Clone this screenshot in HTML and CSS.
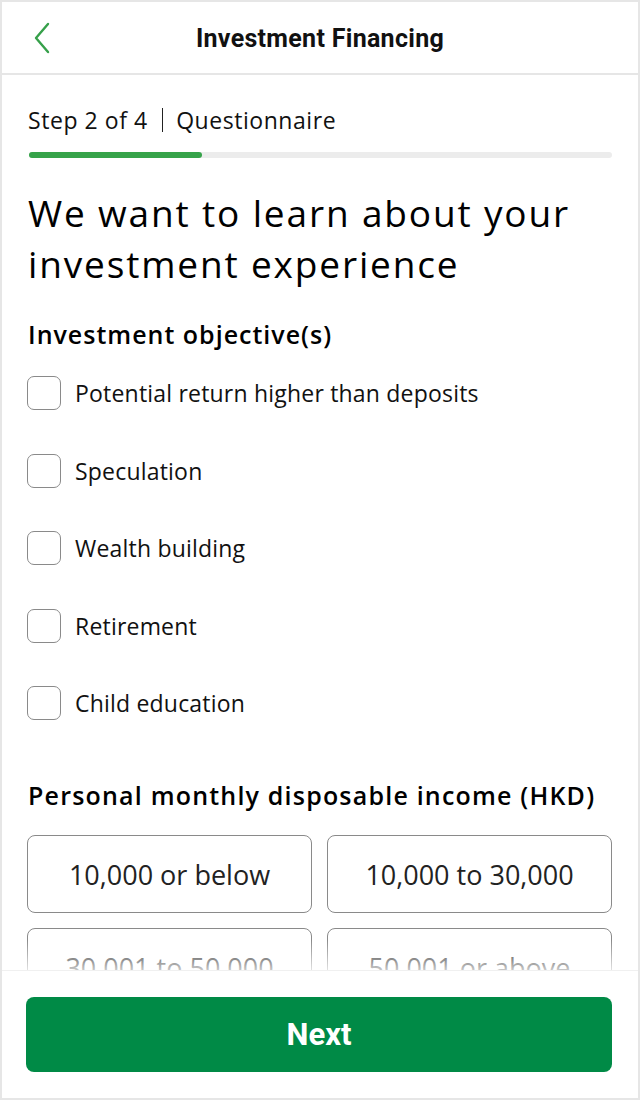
FILE: index.html
```html
<!DOCTYPE html>
<html lang="en">
<head>
<meta charset="utf-8">
<title>Investment Financing</title>
<link rel="stylesheet" href="styles.css">
</head>
<body>
<div class="screen">
  <header class="topbar">
    <button class="back" aria-label="Back">
      <svg width="18" height="32" viewBox="0 0 18 32"><path d="M15 2 L3 16 L15 30" fill="none" stroke="#36a04a" stroke-width="2.4" stroke-linecap="round" stroke-linejoin="round"/></svg>
    </button>
    <h1 class="title">Investment Financing</h1>
  </header>
  <main class="content">
    <div class="step">Step 2 of 4<span class="sep"></span>Questionnaire</div>
    <div class="progress"><div class="progress-fill" style="width:29.6%"></div></div>
    <h2 class="heading">We want to learn about your investment experience</h2>
    <h3 class="section">Investment objective(s)</h3>
    <ul class="checks">
      <li class="check"><span class="box"></span>Potential return higher than deposits</li>
      <li class="check"><span class="box"></span>Speculation</li>
      <li class="check"><span class="box"></span>Wealth building</li>
      <li class="check"><span class="box"></span>Retirement</li>
      <li class="check"><span class="box"></span>Child education</li>
    </ul>
    <h3 class="section section-income">Personal monthly disposable income (HKD)</h3>
    <div class="options">
      <div class="option">10,000 or below</div>
      <div class="option">10,000 to 30,000</div>
      <div class="option">30,001 to 50,000</div>
      <div class="option">50,001 or above</div>
    </div>
  </main>
  <div class="fade"></div>
  <footer class="footer">
    <button class="next">Next</button>
  </footer>
</div>
</body>
</html>
```
FILE: styles.css
```css
html, body {
  margin: 0;
  padding: 0;
  background: #fff;
}
* { box-sizing: border-box; }
.screen {
  width: 640px;
  height: 1100px;
  border: 2px solid #e6e6e6;
  position: relative;
  overflow: hidden;
  font-family: "Open Sans", "Liberation Sans", sans-serif;
  color: #111;
  background: #fff;
}
.topbar {
  height: 73px;
  border-bottom: 2px solid #e6e6e6;
  display: flex;
  align-items: center;
  justify-content: center;
  position: relative;
}
.back {
  position: absolute;
  left: 31px;
  top: 20px;
  padding: 0;
  border: 0;
  background: none;
  width: 18px;
  height: 32px;
}
.title {
  margin: 0;
  font-family: "Roboto", sans-serif;
  font-weight: 700;
  font-size: 25px;
  letter-spacing: 0.3px;
  color: #111;
  margin-top: 2px;
}
.content {
  padding: 0 26px 0 26px;
}
.step {
  margin-top: 31px;
  font-size: 23px;
  letter-spacing: 0.55px;
  line-height: 28px;
  display: flex;
  align-items: center;
  color: #111;
}
.sep {
  display: inline-block;
  width: 1.5px;
  height: 24px;
  background: #222;
  margin: 0 13px 0 14px;
}
.progress {
  margin-top: 18px;
  height: 6px;
  background: #ececec;
  border-radius: 3px;
  margin-left: 1px;
}
.progress-fill {
  height: 100%;
  background: #36a34a;
  border-radius: 3px;
}
.heading {
  margin: 29px 0 0 0;
  font-size: 37px;
  line-height: 51px;
  font-weight: 500;
  letter-spacing: 1.85px;
  color: #000;
}
.section {
  margin: 30px 0 0 0;
  font-size: 25px;
  line-height: 30px;
  font-weight: 600;
  letter-spacing: 1px;
  color: #000;
}
.checks {
  list-style: none;
  padding: 0;
  margin: 27px 0 0 0;
  display: flex;
  flex-direction: column;
  gap: 43.5px;
}
.check {
  display: flex;
  align-items: center;
  font-size: 23px;
  letter-spacing: 0.2px;
  height: 34px;
  color: #111;
}
.box {
  width: 34px;
  height: 34px;
  border: 1.5px solid #8a8a8a;
  border-radius: 7px;
  margin-right: 14px;
  flex-shrink: 0;
  margin-left: -1px;
}
.section-income {
  margin-top: 60px;
  letter-spacing: 1.2px;
}
.options {
  margin-top: 25px;
  margin-left: -1px;
  display: grid;
  grid-template-columns: 1fr 1fr;
  column-gap: 15px;
  row-gap: 15px;
}
.option {
  height: 78px;
  border: 1.5px solid #8a8a8a;
  border-radius: 8px;
  display: flex;
  align-items: center;
  justify-content: center;
  font-size: 27px;
  color: #222;
}
.fade {
  position: absolute;
  left: 0;
  right: 0;
  bottom: 128px;
  height: 30px;
  background: linear-gradient(to bottom, rgba(255,255,255,0), rgba(255,255,255,0.75));
}
.footer {
  position: absolute;
  left: 0;
  right: 0;
  bottom: 0;
  height: 128px;
  background: #fff;
  padding: 26px 26px 0 24px;
  border-top: 1px solid #f0f0f0;
}
.next {
  width: 100%;
  height: 75px;
  border: 0;
  border-radius: 8px;
  background: #008a46;
  color: #fff;
  font-family: "Roboto", sans-serif;
  font-weight: 700;
  font-size: 31px;
}
```
